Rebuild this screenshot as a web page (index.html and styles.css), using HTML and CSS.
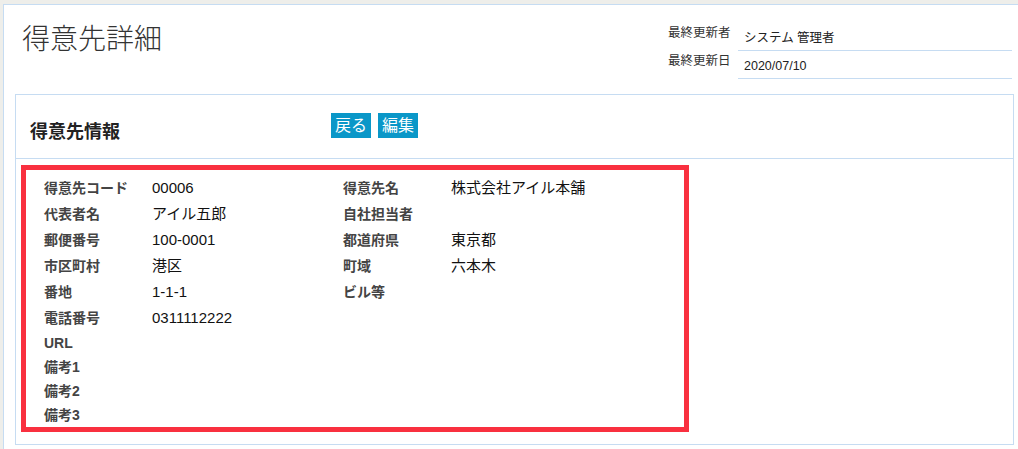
FILE: index.html
```html
<!DOCTYPE html>
<html lang="ja">
<head>
    <meta charset="UTF-8">
    <meta name="viewport" content="width=device-width, initial-scale=1.0">
    <title>得意先詳細</title>
    <link rel="stylesheet" href="styles.css">
</head>
<body>
    <div class="page">
        <!-- ページヘッダー -->
        <div class="page-header">
            <h1>得意先詳細</h1>
            <div class="meta">
                <div class="meta-label">最終更新者</div>
                <div class="meta-value">システム 管理者</div>
                <div class="meta-label">最終更新日</div>
                <div class="meta-value">2020/07/10</div>
            </div>
        </div>

        <div class="panel">
            <div class="panel-header">
                <h2>得意先情報</h2>
                <div class="actions">
                    <button class="btn">戻る</button>
                    <button class="btn">編集</button>
                </div>
            </div>

            <div class="panel-body">
                <div class="detail">
                    <div class="row">
                        <div class="label">得意先コード</div>
                        <div class="value">00006</div>
                        <div class="label">得意先名</div>
                        <div class="value">株式会社アイル本舗</div>
                    </div>
                    <div class="row">
                        <div class="label">代表者名</div>
                        <div class="value">アイル五郎</div>
                        <div class="label">自社担当者</div>
                        <div class="value"></div>
                    </div>
                    <div class="row">
                        <div class="label">郵便番号</div>
                        <div class="value">100-0001</div>
                        <div class="label">都道府県</div>
                        <div class="value">東京都</div>
                    </div>
                    <div class="row">
                        <div class="label">市区町村</div>
                        <div class="value">港区</div>
                        <div class="label">町域</div>
                        <div class="value">六本木</div>
                    </div>
                    <div class="row">
                        <div class="label">番地</div>
                        <div class="value">1-1-1</div>
                        <div class="label">ビル等</div>
                        <div class="value"></div>
                    </div>
                    <div class="row">
                        <div class="label">電話番号</div>
                        <div class="value">0311112222</div>
                    </div>
                    <div class="row">
                        <div class="label">URL</div>
                    </div>
                    <div class="row">
                        <div class="label">備考1</div>
                    </div>
                    <div class="row">
                        <div class="label">備考2</div>
                    </div>
                    <div class="row">
                        <div class="label">備考3</div>
                    </div>
                </div>
            </div>
        </div>
    </div>
</body>
</html>
```

FILE: styles.css
```css
body {
    margin: 0;
    padding: 0;
    background-color: #eeeeea;
    font-family: "Liberation Sans", "Noto Sans CJK JP", sans-serif;
    color: #222;
    overflow: hidden;
}
.page {
    margin: 4px 0 0 3px;
    height: 445px;
    background-color: #fff;
    border-top: 1px solid #c6dcf2;
    border-left: 1px solid #c6dcf2;
    box-sizing: border-box;
}

/* ページヘッダー */
.page-header {
    display: flex;
    justify-content: space-between;
    align-items: flex-start;
    height: 89px;
    box-sizing: border-box;
    padding: 17px 6px 0 18px;
}
h1 {
    margin: 0;
    font-size: 28px;
    font-weight: 300;
    line-height: 36px;
    color: #333;
}
.meta {
    display: grid;
    grid-template-columns: 70px 274px;
    margin-top: 1px;
    font-size: 12.5px;
}
.meta-label {
    line-height: 20px;
    color: #333;
}
.meta-value {
    padding: 5px 0 2px 6px;
    line-height: 20px;
    border-bottom: 1px solid #c6dcf2;
    color: #222;
}

/* パネル */
.panel {
    margin: 0 4px 0 11px;
    height: 351px;
    box-sizing: border-box;
    border: 1px solid #c6dcf2;
}
.panel-header {
    display: flex;
    align-items: flex-start;
    height: 64px;
    box-sizing: border-box;
    padding: 18px 14px 0;
    border-bottom: 1px solid #c6dcf2;
}
h2 {
    width: 301px;
    margin: 9px 0 0;
    font-size: 18px;
    font-weight: bold;
    line-height: 20px;
    color: #222;
}
.actions {
    display: flex;
    gap: 7px;
}
.btn {
    padding: 0 4px;
    height: 25px;
    font-family: inherit;
    font-size: 16px;
    line-height: 25px;
    border: none;
    border-radius: 0;
    background-color: #0a97c8;
    color: #fff;
    cursor: pointer;
}
.panel-body {
    padding: 6px 0 0 5px;
}

/* 詳細テーブル（赤枠） */
.detail {
    width: 668px;
    box-sizing: border-box;
    padding: 5px 0 0;
    border: 5px solid #f9303f;
}
.row {
    display: grid;
    grid-template-columns: 108px 191px 108px 1fr;
    align-items: center;
    padding-left: 18px;
}
.label {
    font-size: 14px;
    font-weight: bold;
    line-height: 24px;
    color: #444;
}
.value {
    font-size: 15px;
    line-height: 26px;
    color: #111;
}
```
